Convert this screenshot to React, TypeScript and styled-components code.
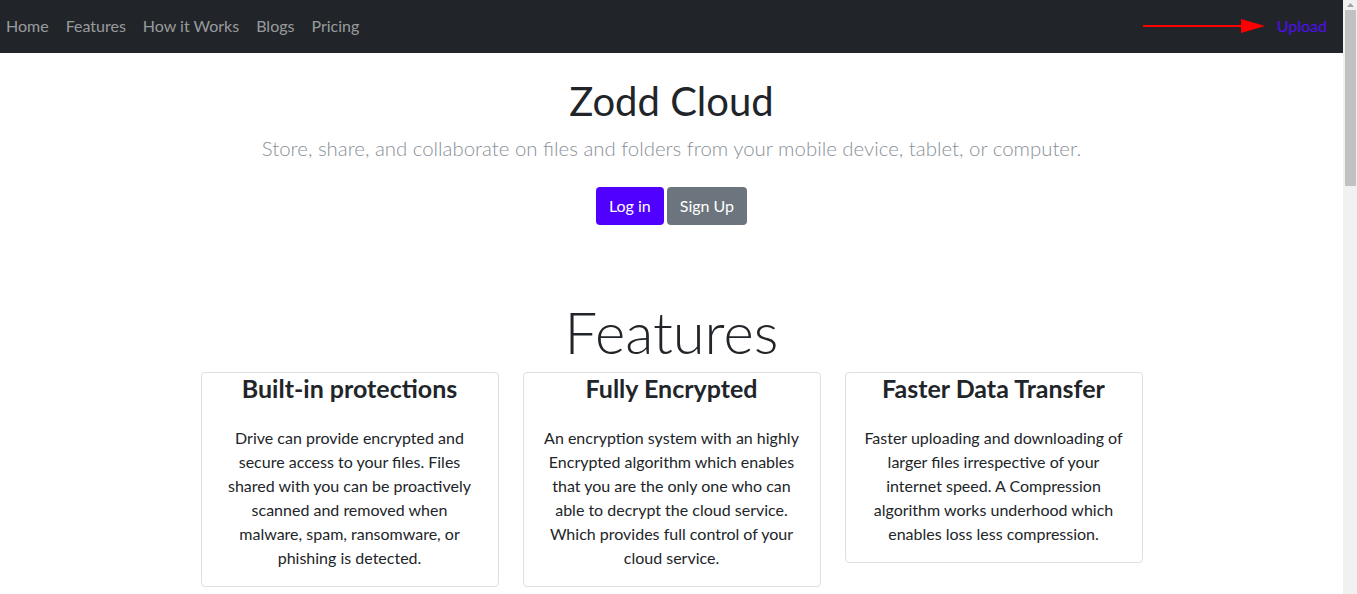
import React from "react";
import styled, { createGlobalStyle } from "styled-components";

const Global = createGlobalStyle`
  html, body { margin: 0; padding: 0; overflow: hidden; }
  body {
    font-family: Lato, "Open Sans", sans-serif;
    color: #212529;
    background: #fff;
    font-size: 16px;
    line-height: 1.5;
  }
  * { box-sizing: border-box; }
`;

const Window = styled.div`
  display: flex;
  width: 1357px;
  height: 594px;
  overflow: hidden;
`;

const Page = styled.main`
  width: 1343px;
  flex: none;
`;

const ScrollTrack = styled.div`
  width: 14px;
  height: 594px;
  background: #f1f1f1;
  display: flex;
  flex-direction: column;
  align-items: center;
  padding-top: 3px;
`;

const ScrollThumb = styled.div`
  width: 11px;
  height: 176px;
  margin-top: 3px;
  margin-left: 1px;
  background: #c1c1c1;
`;

const NavBar = styled.nav`
  height: 53px;
  background: #212529;
  display: flex;
  align-items: center;
  justify-content: space-between;
  padding: 0 16px 2px 6px;
`;

const NavLinks = styled.div`
  display: flex;
  gap: 17px;
`;

const NavLink = styled.a`
  color: rgba(255, 255, 255, 0.55);
  text-decoration: none;
  font-size: 16px;
`;

const RightSide = styled.div`
  display: flex;
  align-items: center;
  gap: 10px;
`;

const UploadLink = styled.a`
  color: #4f0ff0;
  text-decoration: none;
  font-size: 16px;
`;

const Hero = styled.header`
  text-align: center;
  padding-top: 24px;
`;

const Title = styled.h1`
  margin: 0;
  font-size: 40px;
  font-weight: 400;
  line-height: 1.2;
`;

const Lead = styled.p`
  margin: 8px 0 0;
  font-size: 20.4px;
  font-weight: 300;
  color: #8a9097;
`;

const ButtonRow = styled.div`
  display: flex;
  justify-content: center;
  gap: 3px;
  margin-top: 23px;
`;

const Button = styled.button<{ $variant: "primary" | "secondary" }>`
  font-family: inherit;
  font-size: 16px;
  color: #fff;
  border: none;
  border-radius: 4px;
  height: 38px;
  padding: 0 13px;
  background: ${(p) => (p.$variant === "primary" ? "#5000ff" : "#6c757d")};
`;

const FeaturesTitle = styled.h2`
  margin: 72px 0 0;
  text-align: center;
  font-size: 58px;
  font-weight: 300;
  line-height: 1.2;
`;

const CardGrid = styled.section`
  width: 942px;
  margin: 6px auto 40px;
  display: grid;
  grid-template-columns: repeat(3, 298px);
  gap: 24px;
  align-items: start;
`;

const Card = styled.article`
  border: 1px solid #dcdfe3;
  border-radius: 4px;
  padding: 0 18px 16px;
  text-align: center;
`;

const CardTitle = styled.h3`
  margin: 0;
  font-size: 25px;
  font-weight: 700;
  line-height: 30px;
`;

const CardText = styled.p`
  margin: 23px 0 0;
  font-size: 16px;
  line-height: 24px;
`;

const Arrow = () => (
  <svg width="124" height="16" viewBox="0 0 124 16">
    <line x1="0" y1="8" x2="102" y2="8" stroke="#ff0000" strokeWidth="2" />
    <polygon points="98,1 122,8 98,15" fill="#ff0000" />
  </svg>
);

const UpArrow = () => (
  <svg width="7" height="4" viewBox="0 0 7 4">
    <polygon points="3.5,0 7,4 0,4" fill="#a3a3a3" />
  </svg>
);

const features = [
  {
    title: "Built-in protections",
    text: "Drive can provide encrypted and secure access to your files. Files shared with you can be proactively scanned and removed when malware, spam, ransomware, or phishing is detected.",
  },
  {
    title: "Fully Encrypted",
    text: "An encryption system with an highly Encrypted algorithm which enables that you are the only one who can able to decrypt the cloud service. Which provides full control of your cloud service.",
  },
  {
    title: "Faster Data Transfer",
    text: "Faster uploading and downloading of larger files irrespective of your internet speed. A Compression algorithm works underhood which enables loss less compression.",
  },
];

export default function App() {
  return (
    <>
      <Global />
      <Window>
        <Page>
          <NavBar>
            <NavLinks>
              <NavLink href="#">Home</NavLink>
              <NavLink href="#">Features</NavLink>
              <NavLink href="#">How it Works</NavLink>
              <NavLink href="#">Blogs</NavLink>
              <NavLink href="#">Pricing</NavLink>
            </NavLinks>
            <RightSide>
              <Arrow />
              <UploadLink href="#">Upload</UploadLink>
            </RightSide>
          </NavBar>
          <Hero>
            <Title>Zodd Cloud</Title>
            <Lead>
              Store, share, and collaborate on files and folders from your
              mobile device, tablet, or computer.
            </Lead>
            <ButtonRow>
              <Button $variant="primary">Log in</Button>
              <Button $variant="secondary">Sign Up</Button>
            </ButtonRow>
          </Hero>
          <FeaturesTitle>Features</FeaturesTitle>
          <CardGrid>
            {features.map((f) => (
              <Card key={f.title}>
                <CardTitle>{f.title}</CardTitle>
                <CardText>{f.text}</CardText>
              </Card>
            ))}
          </CardGrid>
        </Page>
        <ScrollTrack>
          <UpArrow />
          <ScrollThumb />
        </ScrollTrack>
      </Window>
    </>
  );
}
